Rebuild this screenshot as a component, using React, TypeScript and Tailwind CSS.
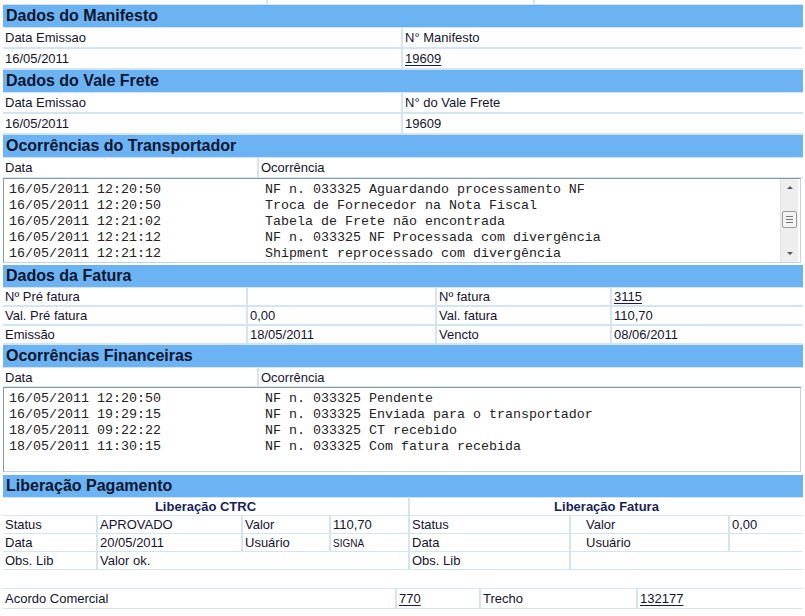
import React from "react";

const transportador = [
    ["16/05/2011 12:20:50", "NF n. 033325 Aguardando processamento NF"],
    ["16/05/2011 12:20:50", "Troca de Fornecedor na Nota Fiscal"],
    ["16/05/2011 12:21:02", "Tabela de Frete não encontrada"],
    ["16/05/2011 12:21:12", "NF n. 033325 NF Processada com divergência"],
    ["16/05/2011 12:21:12", "Shipment reprocessado com divergência"],
];

const financeiras = [
    ["16/05/2011 12:20:50", "NF n. 033325 Pendente"],
    ["16/05/2011 19:29:15", "NF n. 033325 Enviada para o transportador"],
    ["18/05/2011 09:22:22", "NF n. 033325 CT recebido"],
    ["18/05/2011 11:30:15", "NF n. 033325 Com fatura recebida"],
];

function Header({ title }: { title: string }) {
    return (
        <div className="h-[23px] border-b border-[#d3e4f4] bg-[#6cb3f3] px-[3px] flex items-center font-bold text-[16px] text-[#0a1530]">
            {title}
        </div>
    );
}

function Cell({ children, className = "" }: { children?: React.ReactNode; className?: string }) {
    return <div className={"bg-white px-[2px] pt-px flex items-center whitespace-nowrap " + className}>{children}</div>;
}

function Link({ children }: { children: React.ReactNode }) {
    return <span className="underline decoration-[#1a1a50] underline-offset-2">{children}</span>;
}

function LogBox({ rows, scroll }: { rows: string[][]; scroll?: boolean }) {
    return (
        <div className="h-[85px] flex border border-[#8a98a6] border-r-[#c8d2dc] border-b-[#c8d2dc] bg-white mr-[2px]">
            <pre className="flex-1 pl-[5px] pt-[3px] font-['Liberation_Mono',monospace] text-[13.33px] leading-[16px] text-[#222]">
                {rows.map((r) => r[0] + "             " + r[1]).join("\n")}
            </pre>
            {scroll ? (
                <div className="w-[18px] flex flex-col bg-[#eeeeee] border-l border-[#e2e2e2] mr-[2px]">
                    <div className="h-[17px] flex items-center justify-center">
                        <div className="w-0 h-0 border-l-[3px] border-r-[3px] border-b-[3px] border-l-transparent border-r-transparent border-b-[#555]" />
                    </div>
                    <div className="h-[15px]" />
                    <div className="h-[17px] mx-[1px] rounded-[2px] border border-[#9a9a9a] bg-[#f4f4f4] flex flex-col items-center justify-center gap-[2px]">
                        <div className="w-[7px] h-px bg-[#777]" />
                        <div className="w-[7px] h-px bg-[#777]" />
                        <div className="w-[7px] h-px bg-[#777]" />
                    </div>
                    <div className="flex-1" />
                    <div className="h-[17px] flex items-center justify-center">
                        <div className="w-0 h-0 border-l-[3px] border-r-[3px] border-t-[3px] border-l-transparent border-r-transparent border-t-[#555]" />
                    </div>
                </div>
            ) : null}
        </div>
    );
}

export default function App() {
    const rowTwo = "grid grid-cols-[398px_1fr] gap-x-[2px] bg-[#d3e4f4] pb-[2px]";
    const fatura = "grid grid-cols-[243px_187px_173px_1fr] gap-x-[2px] bg-[#d3e4f4] pb-[2px]";
    const libLeft = "grid grid-cols-[93px_143px_86px_1fr] gap-x-[2px] bg-[#d3e4f4] pb-[1px]";
    const libRight = "grid grid-cols-[159px_157px_1fr] gap-x-[2px] bg-[#d3e4f4] pb-[1px]";

    return (
        <div className="w-[805px] h-[616px] bg-white overflow-hidden pl-[3px] pr-[2px] font-['Liberation_Sans',Arial,sans-serif] text-[13px] text-[#14142e]">
            {/* partial row cut at top */}
            <div className="grid grid-cols-[263px_265px_1fr] gap-x-[2px] bg-[#d3e4f4] pb-[1px]">
                <div className="h-[4px] bg-white" />
                <div className="h-[4px] bg-white" />
                <div className="h-[4px] bg-white" />
            </div>

            <Header title="Dados do Manifesto" />
            <div className={rowTwo}>
                <Cell className="h-[19px]">Data Emissao</Cell>
                <Cell className="h-[19px]">N° Manifesto</Cell>
            </div>
            <div className={rowTwo}>
                <Cell className="h-[19px]">16/05/2011</Cell>
                <Cell className="h-[19px]"><Link>19609</Link></Cell>
            </div>

            <Header title="Dados do Vale Frete" />
            <div className={rowTwo}>
                <Cell className="h-[19px]">Data Emissao</Cell>
                <Cell className="h-[19px]">N° do Vale Frete</Cell>
            </div>
            <div className={rowTwo}>
                <Cell className="h-[19px]">16/05/2011</Cell>
                <Cell className="h-[19px]">19609</Cell>
            </div>

            <Header title="Ocorrências do Transportador" />
            <div className="grid grid-cols-[254px_1fr] gap-x-[2px] bg-[#d3e4f4] pb-px">
                <Cell className="h-[19px]">Data</Cell>
                <Cell className="h-[19px]">Ocorrência</Cell>
            </div>
            <LogBox rows={transportador} scroll />

            <div className="h-[2px]" />
            <Header title="Dados da Fatura" />
            <div className={fatura}>
                <Cell className="h-[17px]">Nº Pré fatura</Cell>
                <Cell className="h-[17px]" />
                <Cell className="h-[17px]">Nº fatura</Cell>
                <Cell className="h-[17px]"><Link>3115</Link></Cell>
            </div>
            <div className={fatura}>
                <Cell className="h-[17px]">Val. Pré fatura</Cell>
                <Cell className="h-[17px]">0,00</Cell>
                <Cell className="h-[17px]">Val. fatura</Cell>
                <Cell className="h-[17px]">110,70</Cell>
            </div>
            <div className={fatura}>
                <Cell className="h-[17px]">Emissão</Cell>
                <Cell className="h-[17px]">18/05/2011</Cell>
                <Cell className="h-[17px]">Vencto</Cell>
                <Cell className="h-[17px]">08/06/2011</Cell>
            </div>

            <Header title="Ocorrências Financeiras" />
            <div className="grid grid-cols-[254px_1fr] gap-x-[2px] bg-[#d3e4f4] pb-px">
                <Cell className="h-[18px]">Data</Cell>
                <Cell className="h-[18px]">Ocorrência</Cell>
            </div>
            <LogBox rows={financeiras} />

            <div className="h-[3px]" />
            <Header title="Liberação Pagamento" />
            <div className="grid grid-cols-[405px_1fr] gap-x-[2px] bg-[#d3e4f4]">
                <div className="flex flex-col">
                    <Cell className="h-[17px] justify-center font-bold text-[#1a1f5a] mb-px">Liberação CTRC</Cell>
                    <div className={libLeft}>
                        <Cell className="h-[17px]">Status</Cell>
                        <Cell className="h-[17px]">APROVADO</Cell>
                        <Cell className="h-[17px]">Valor</Cell>
                        <Cell className="h-[17px]">110,70</Cell>
                    </div>
                    <div className={libLeft}>
                        <Cell className="h-[17px]">Data</Cell>
                        <Cell className="h-[17px]">20/05/2011</Cell>
                        <Cell className="h-[17px]">Usuário</Cell>
                        <Cell className="h-[17px] text-[10px]">SIGNA</Cell>
                    </div>
                    <div className="grid grid-cols-[93px_1fr] gap-x-[2px] bg-[#d3e4f4] pb-[1px]">
                        <Cell className="h-[17px]">Obs. Lib</Cell>
                        <Cell className="h-[17px]">Valor ok.</Cell>
                    </div>
                </div>
                <div className="flex flex-col">
                    <Cell className="h-[17px] justify-center font-bold text-[#1a1f5a] mb-px">Liberação Fatura</Cell>
                    <div className={libRight}>
                        <Cell className="h-[17px]">Status</Cell>
                        <Cell className="h-[17px] pl-[15px]">Valor</Cell>
                        <Cell className="h-[17px]">0,00</Cell>
                    </div>
                    <div className={libRight}>
                        <Cell className="h-[17px]">Data</Cell>
                        <Cell className="h-[17px] pl-[15px]">Usuário</Cell>
                        <Cell className="h-[17px]" />
                    </div>
                    <div className="grid grid-cols-[159px_1fr] gap-x-[2px] bg-[#d3e4f4] pb-[1px]">
                        <Cell className="h-[17px]">Obs. Lib</Cell>
                        <Cell className="h-[17px]" />
                    </div>
                </div>
            </div>

            <div className="h-[18px]" />
            <div className="grid grid-cols-[392px_82px_155px_1fr] gap-x-[2px] bg-[#d3e4f4] py-[1px]">
                <Cell className="h-[19px]">Acordo Comercial</Cell>
                <Cell className="h-[19px]"><Link>770</Link></Cell>
                <Cell className="h-[19px]">Trecho</Cell>
                <Cell className="h-[19px]"><Link>132177</Link></Cell>
            </div>
        </div>
    );
}
